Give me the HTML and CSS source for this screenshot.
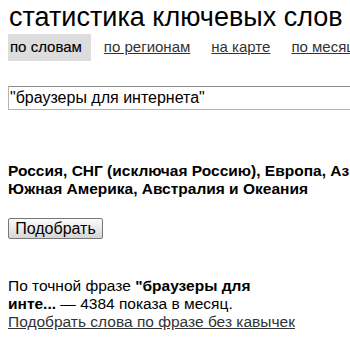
FILE: index.html
```html
<!DOCTYPE html>
<html lang="ru">
<head>
<meta charset="utf-8">
<link rel="stylesheet" href="styles.css">
</head>
<body>
<div class="page">
  <h1 class="title">статистика ключевых слов</h1>
  <nav class="tabs">
    <span class="tab tab-active">по словам</span>
    <a class="tab" href="#">по регионам</a>
    <a class="tab" href="#">на карте</a>
    <a class="tab" href="#">по месяцам</a>
  </nav>
  <div class="search">
    <input class="query" type="text" value="&quot;браузеры для интернета&quot;">
  </div>
  <div class="regions">Россия, СНГ (исключая Россию), Европа, Азия, Африка, Северная и Южная Америка, Австралия и Океания</div>
  <div class="actions"><button class="btn" type="button">Подобрать</button></div>
  <div class="result">
    <p class="line">По точной фразе <b>"браузеры для инте...</b> — 4384 показа в месяц.</p>
    <a class="more" href="#">Подобрать слова по фразе без кавычек</a>
  </div>
</div>
</body>
</html>
```
FILE: styles.css
```css
html, body {
  margin: 0;
  padding: 0;
  background: #fff;
  overflow: hidden;
}
body {
  font-family: "Liberation Sans", Arial, sans-serif;
  color: #000;
  width: 350px;
  height: 340px;
}
.page {
  padding: 0 0 0 8px;
  width: 700px;
}
.title {
  margin: 0;
  padding: 2px 0 0 1px;
  font-size: 27px;
  font-weight: normal;
  line-height: 30px;
  white-space: nowrap;
}
.tabs {
  display: flex;
  align-items: flex-start;
  margin-top: 2px;
  white-space: nowrap;
}
.tab {
  font-size: 15px;
  line-height: 17px;
  padding: 4px 0 6px 0;
  color: #333;
  margin-right: 21px;
}
.tab-active {
  background: #ddd;
  color: #000;
  padding: 4px 9px 6px 2px;
  margin-right: 13px;
  -webkit-text-stroke: 0.15px #000;
}
.search {
  margin-top: 25px;
}
.query {
  box-sizing: border-box;
  display: block;
  width: 500px;
  height: 24px;
  border: 1px solid #b5b5b5;
  border-top-color: #8a8a8a;
  padding: 0 1px;
  font-family: "Liberation Sans", Arial, sans-serif;
  font-size: 16px;
  color: #000;
  outline: none;
}
.regions {
  margin-top: 52px;
  font-size: 15.5px;
  line-height: 18px;
  font-weight: bold;
  width: 545px;
}
.actions {
  margin-top: 20px;
}
.btn {
  font-family: "Liberation Sans", Arial, sans-serif;
  font-size: 16px;
  height: 21px;
  width: 95px;
  padding: 0 4px;
  border: 1px solid #777;
  border-radius: 2px;
  background: linear-gradient(#fbfbfb, #d6d6d6);
  color: #000;
}
.result {
  margin-top: 38px;
  width: 270px;
  font-size: 15.5px;
  line-height: 18px;
}
.line {
  margin: 0;
}
.more {
  color: #333;
  white-space: nowrap;
}
```
